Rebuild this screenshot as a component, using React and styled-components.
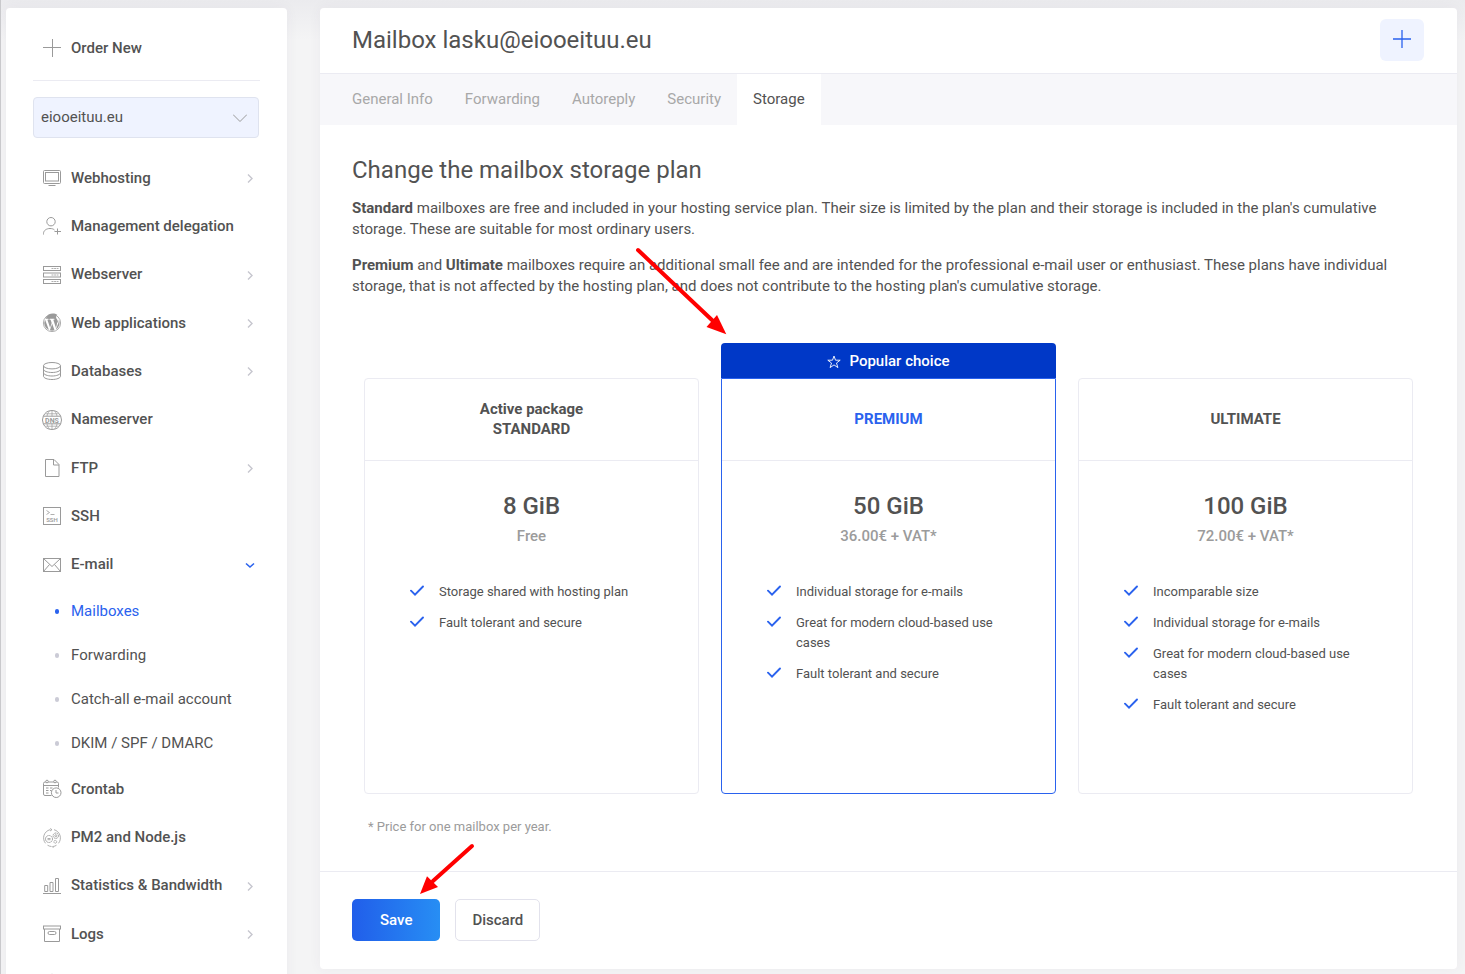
import React from 'react';
import styled, { createGlobalStyle, css } from 'styled-components';

const color = {
  text: '#525252',
  muted: '#9b9b9b',
  faint: '#a8a8a8',
  primary: '#2a62ee',
  deep: '#0038c7',
  tint: '#eff3ff',
  line: '#ebebf2',
  icon: '#9a9a9a',
  arrow: '#ff0000',
};

const GlobalStyle = createGlobalStyle`
  *, *::before, *::after { box-sizing: border-box; }
  html { background: #f4f4f5; }
  body {
    margin: 0;
    color: ${color.text};
    font-family: Roboto, "Liberation Sans", sans-serif;
    font-size: 15px;
    line-height: 21px;
  }
  a { color: inherit; text-decoration: none; }
  ul { list-style: none; margin: 0; padding: 0; }
  h1, h2, h3, p { margin: 0; }
  button, select { font: inherit; color: inherit; }
`;

const Page = styled.div`
  display: flex;
  align-items: flex-start;
  gap: 33px;
  height: 100vh;
  overflow: hidden;
  padding: 8px 8px 0 5px;
  border-left: 1px solid #c9c9cc;
  background: linear-gradient(#ebebee, #f4f4f5 40px);
`;

const panel = css`
  background: #fff;
  border-radius: 4px;
  box-shadow: 0 0 13px rgba(82, 63, 105, 0.05);
`;

const Sidebar = styled.aside`
  ${panel}
  flex: 0 0 281px;
  min-height: 100vh;
  padding: 16px 27px 0;
`;

const Divider = styled.hr`
  height: 1px;
  margin: 8px 0 16px;
  border: 0;
  background: ${color.line};
`;

const DomainPicker = styled.label`
  display: block;
  position: relative;
  margin: 0 1px 16px 0;

  svg {
    position: absolute;
    right: 12px;
    top: 14px;
    pointer-events: none;
  }
`;

const DomainSelect = styled.select`
  appearance: none;
  display: block;
  width: 100%;
  height: 41px;
  padding: 0 32px 0 7px;
  border: 1px solid #dfe3ef;
  border-radius: 4px;
  background: ${color.tint};
`;

const MenuGroup = styled.ul`
  display: grid;
  grid-auto-rows: 1fr;
  min-height: ${(p) => p.$height}px;
`;

const MenuLink = styled.a`
  display: flex;
  align-items: center;
  gap: 9px;
  height: 100%;
  min-height: 48px;
  padding: 0 5px 0 9px;
  font-weight: 500;
`;

const MenuIcon = styled.svg`
  flex: 0 0 20px;
  width: 20px;
  height: 20px;
  fill: none;
  stroke: ${color.icon};
  stroke-width: 1;
  overflow: visible;
`;

const MenuLabel = styled.span`
  flex: 1;
  white-space: nowrap;
`;

const SubLink = styled.a`
  display: flex;
  align-items: center;
  gap: 12px;
  height: 44px;
  padding-left: 22px;
  color: ${(p) => (p.$active ? color.primary : color.text)};

  &::before {
    content: '';
    width: 4px;
    height: 5px;
    border-radius: 2px;
    background: ${(p) => (p.$active ? color.primary : '#cbcbd6')};
  }
`;

const Main = styled.main`
  ${panel}
  position: relative;
  flex: 1;
  min-width: 0;
`;

const MainHeader = styled.header`
  display: flex;
  align-items: center;
  justify-content: space-between;
  height: 66px;
  padding: 0 33px 2px 32px;
  border-bottom: 1px solid ${color.line};
`;

const Title = styled.h1`
  font-size: 24px;
  line-height: 32px;
  font-weight: 400;
`;

const AddButton = styled.button`
  display: flex;
  align-items: center;
  justify-content: center;
  width: 44px;
  height: 42px;
  padding: 0 0 2px;
  border: 0;
  border-radius: 6px;
  background: ${color.tint};
`;

const Tabs = styled.nav`
  display: flex;
  padding: 0 16px;
  background: #f7f7fa;
`;

const Tab = styled.a`
  padding: 15px 16px;
  color: ${(p) => (p.$active ? color.text : color.faint)};
  background: ${(p) => (p.$active ? '#fff' : 'transparent')};
`;

const Content = styled.section`
  padding: 29px 32px 34px;
`;

const Intro = styled.p`
  margin-top: ${(p) => (p.$first ? 12 : 15)}px;

  b { font-weight: 700; }
`;

const Plans = styled.div`
  display: grid;
  grid-template-columns: repeat(3, 1fr);
  gap: 22px;
  margin-top: 46px;
  padding: 0 12px;
`;

const Plan = styled.article`
  display: flex;
  flex-direction: column;
  padding-top: ${(p) => (p.$popular ? 0 : 35)}px;
`;

const PopularBadge = styled.div`
  display: flex;
  align-items: center;
  justify-content: center;
  gap: 8px;
  height: 35px;
  padding-top: 2px;
  border-radius: 4px 4px 0 0;
  background: ${color.deep};
  color: #fff;
  font-weight: 500;
`;

const PlanBox = styled.div`
  flex: 1;
  min-height: 416px;
  border: 1px solid ${(p) => (p.$popular ? color.primary : color.line)};
  border-radius: ${(p) => (p.$popular ? '0 0 4px 4px' : '4px')};
`;

const PlanHead = styled.h3`
  display: flex;
  flex-direction: column;
  align-items: center;
  justify-content: center;
  height: 82px;
  padding-bottom: 2px;
  border-bottom: 1px solid ${color.line};
  color: ${(p) => (p.$popular ? color.primary : color.text)};
  font-size: 15px;
  line-height: 20px;
  font-weight: 700;
`;

const PlanSize = styled.p`
  margin-top: 29px;
  font-size: 24px;
  line-height: 32px;
  font-weight: 500;
  text-align: center;
`;

const PlanPrice = styled.p`
  margin-top: 4px;
  color: ${color.muted};
  font-weight: 500;
  text-align: center;
`;

const Features = styled.ul`
  display: grid;
  gap: 11px;
  padding: 35px 45px;
  font-size: 13px;
  line-height: 20px;
`;

const Feature = styled.li`
  display: flex;
  gap: 15px;

  svg { flex: none; margin-top: 3px; }
`;

const Footnote = styled.p`
  margin: 22px 16px 0;
  color: ${color.muted};
  font-size: 13px;
`;

const Actions = styled.footer`
  display: flex;
  gap: 15px;
  padding: 27px 32px 28px;
  border-top: 1px solid ${color.line};
`;

const Button = styled.button`
  height: 42px;
  padding: 0 ${(p) => (p.$primary ? 28 : 16)}px;
  border-radius: 5px;
  font-weight: 500;
  ${(p) =>
    p.$primary
      ? css`
          border: 0;
          color: #fff;
          background: linear-gradient(90deg, #215eea, #278ef4);
        `
      : css`
          border: 1px solid #e2e2ec;
          background: #fff;
        `}
`;

const Callout = styled.svg`
  position: absolute;
  left: ${(p) => p.$x}px;
  top: ${(p) => p.$y}px;
  pointer-events: none;
`;

const icons = {
  plus: <path d="M10.500 1v18M1 9.500h18" />,
  monitor: (
    <>
      <rect x="1.500" y="2.500" width="17" height="13" rx="1" />
      <rect x="3.500" y="4.500" width="13" height="8.500" />
      <path d="M6.500 17.500h7" />
    </>
  ),
  userPlus: (
    <>
      <circle cx="9" cy="5.700" r="4.200" />
      <path d="M1.500 18.500v-1c0-3 3-5 6.500-5 2 0 3.500.5 4.500 1.500M15.500 12.500v6M12.500 15.500h6.500" />
    </>
  ),
  server: (
    <>
      <rect x="1.500" y="1.500" width="17" height="4" />
      <rect x="1.500" y="8" width="17" height="4" />
      <rect x="1.500" y="14.500" width="17" height="4" />
      <path d="M9.500 3.500h7M9.500 10h7M9.500 16.500h7" strokeDasharray="2 .6" strokeWidth=".8" />
    </>
  ),
  wordpress: (
    <>
      <circle cx="10" cy="10" r="8.600" strokeWidth=".8" />
      <path
        d="M3.100 6.700 6.900 17.100A7.600 7.600 0 0 1 3.100 6.700ZM16 9.600c0-1.400-.5-2.300-.9-3-.6-.9-1.100-1.700-1.100-2.600 0-1 .7-1.800 1.500-2A7.700 7.700 0 0 0 3.600 5.800h2.600c.6 0 .6.8 0 .9l-.8.1 2.700 8 1.600-4.800-1.100-3.200-.8-.1c-.6 0-.5-.9.1-.9h4.200c.6 0 .6.8 0 .9l-.8.1 2.600 7.900.8-2.400c.4-1 .3-1.900.3-2.700ZM10.200 10.700 7.900 17.300c1.600.5 3.200.4 4.600-.1ZM16.800 6.400c.2 2-.3 3.400-.9 4.900l-2.100 5.200a7.600 7.600 0 0 0 3-10.100Z"
        fill={color.icon}
        stroke="none"
      />
    </>
  ),
  database: (
    <>
      <ellipse cx="10" cy="4.700" rx="8.500" ry="3.200" />
      <path d="M1.500 4.700v10.500c0 1.800 3.800 3.300 8.500 3.300s8.500-1.500 8.500-3.300V4.700M1.500 8.200c0 1.800 3.800 3.300 8.500 3.300s8.500-1.500 8.500-3.300M1.500 11.700c0 1.800 3.800 3.300 8.500 3.300s8.500-1.500 8.500-3.300" />
    </>
  ),
  dns: (
    <>
      <path
        d="M1.300 6.200a9.500 9.500 0 0 1 17.400 0ZM1.300 13.800a9.500 9.500 0 0 0 17.400 0ZM1.300 6.200a9.500 9.500 0 0 0 0 7.600M18.700 6.200a9.500 9.500 0 0 1 0 7.600"
      />
      <path
        d="M3.500 3.800h13M3.500 16.200h13M10 .5v5.700M10 13.800v5.700M7.500 1C6 2.500 5.300 4.500 5 6.200M12.500 1C14 2.500 14.700 4.500 15 6.200M5 13.800c.3 1.700 1 3.700 2.500 5.200M15 13.800c-.3 1.700-1 3.700-2.500 5.200"
        strokeWidth=".7"
      />
      <text x="10" y="12.500" textAnchor="middle" fontSize="7" fontWeight="700" fill={color.icon} stroke="none">
        DNS
      </text>
    </>
  ),
  file: <path d="M3.500 1.500h8.500l5 5v12H3.500ZM11.500 1.500V7H17" />,
  ssh: (
    <>
      <rect x="1.500" y="1.500" width="17" height="17" />
      <path d="m4.500 4.500 3 2-3 2M8.500 8.500h4" strokeWidth=".8" />
      <text x="10" y="16.300" textAnchor="middle" fontSize="6" fill={color.icon} stroke="none">
        SSH
      </text>
    </>
  ),
  mail: (
    <>
      <rect x="1.500" y="3.500" width="17" height="13" />
      <path d="m1.500 3.500 8.500 8 8.500-8M1.500 16.500l6-7M18.500 16.500l-6-7" />
    </>
  ),
  calendar: (
    <>
      <path d="M9.500 16.500H3a1.500 1.500 0 0 1-1.500-1.500V4.500A1.500 1.500 0 0 1 3 3h12a1.500 1.500 0 0 1 1.500 1.500v4M1.500 6.500h15" />
      <circle cx="5" cy="2.500" r="1.300" fill="#fff" />
      <circle cx="13" cy="2.500" r="1.300" fill="#fff" />
      <path d="M4 9h2.500M8 9h2.500M4 11.500h2.500M8 11.500h1.500M4 14h2.500" />
      <circle cx="14.200" cy="13.700" r="4.800" />
      <path d="M14 11v3h2.500" />
    </>
  ),
  gears: (
    <>
      <path
        d="M8 1.700a8.500 8.500 0 0 0-4.500 13.600M12 1.700a8.500 8.500 0 0 1 4.500 13.600M5.500 17.200q2 1.200 4 1.300M11 18.500q2-.2 3.500-1.300M8 .5l2 1.200L8 3M11.500 19.500l-1.500-1"
        strokeWidth=".8"
      />
      <circle cx="7" cy="11" r="3.500" strokeDasharray="1.600 .6" />
      <path d="M5.500 10.500h3M5.500 11.700h3" strokeWidth=".8" />
      <circle cx="13.800" cy="7.700" r="2.700" strokeDasharray="1.600 .6" />
      <circle cx="13.800" cy="7.700" r="1" strokeWidth=".8" />
      <circle cx="13.300" cy="13.800" r="1.400" strokeDasharray="1 .5" />
    </>
  ),
  chart: (
    <>
      <path d="M1 17.500h18" />
      <path d="M2.700 15.500v-6h3v6ZM8 15.500v-9h3v9ZM13.500 15.500v-13h3v13Z" />
    </>
  ),
  archive: (
    <>
      <rect x="1.500" y="2" width="17" height="3" />
      <path d="M2.500 5v12.500h15V5" />
      <rect x="6" y="7.500" width="8" height="3" rx="1.500" />
    </>
  ),
  shield: <path d="M10 1c2 2 4.500 3 8 3v6c0 4-3 7-8 9-5-2-8-5-8-9V4c3.500 0 6-1 8-3Z" />,
};

function Chevron({ open }) {
  return (
    <svg
      width="10"
      height="10"
      viewBox="0 0 10 10"
      fill="none"
      strokeWidth={open ? 1.6 : 1.4}
      stroke={open ? color.primary : '#c6c6ce'}
    >
      <path d={open ? 'M1 3.500 5 7l4-3.500' : 'm3 1.500 4 4-4 4'} />
    </svg>
  );
}

function Check() {
  return (
    <svg
      width="14"
      height="12"
      viewBox="0 0 14 12"
      fill="none"
      stroke={color.primary}
      strokeWidth="1.900"
      strokeLinecap="round"
    >
      <path d="m1 5.700 4 4L13 1.500" />
    </svg>
  );
}

function MenuItem({ icon, label, arrow, open }) {
  return (
    <li>
      <MenuLink href="#">
        <MenuIcon viewBox="0 0 20 20" aria-hidden="true">{icons[icon]}</MenuIcon>
        {label && <MenuLabel>{label}</MenuLabel>}
        {arrow && <Chevron open={open} />}
      </MenuLink>
    </li>
  );
}

const upperMenu = [
  { icon: 'monitor', label: 'Webhosting', arrow: true },
  { icon: 'userPlus', label: 'Management delegation' },
  { icon: 'server', label: 'Webserver', arrow: true },
  { icon: 'wordpress', label: 'Web applications', arrow: true },
  { icon: 'database', label: 'Databases', arrow: true },
  { icon: 'dns', label: 'Nameserver' },
  { icon: 'file', label: 'FTP', arrow: true },
  { icon: 'ssh', label: 'SSH' },
  { icon: 'mail', label: 'E-mail', arrow: true, open: true },
];

const emailMenu = ['Mailboxes', 'Forwarding', 'Catch-all e-mail account', 'DKIM / SPF / DMARC'];

const lowerMenu = [
  { icon: 'calendar', label: 'Crontab' },
  { icon: 'gears', label: 'PM2 and Node.js' },
  { icon: 'chart', label: 'Statistics & Bandwidth', arrow: true },
  { icon: 'archive', label: 'Logs', arrow: true },
  { icon: 'shield' },
];

const tabs = ['General Info', 'Forwarding', 'Autoreply', 'Security', 'Storage'];

const plans = [
  {
    name: 'STANDARD',
    active: true,
    size: '8 GiB',
    price: 'Free',
    features: ['Storage shared with hosting plan', 'Fault tolerant and secure'],
  },
  {
    name: 'PREMIUM',
    popular: true,
    size: '50 GiB',
    price: '36.00€ + VAT*',
    features: ['Individual storage for e-mails', 'Great for modern cloud-based use cases', 'Fault tolerant and secure'],
  },
  {
    name: 'ULTIMATE',
    size: '100 GiB',
    price: '72.00€ + VAT*',
    features: [
      'Incomparable size',
      'Individual storage for e-mails',
      'Great for modern cloud-based use cases',
      'Fault tolerant and secure',
    ],
  },
];

function PlanCard({ plan }) {
  return (
    <Plan $popular={plan.popular}>
      {plan.popular && (
        <PopularBadge>
          <svg width="14" height="14" viewBox="0 0 14 14" fill="none" stroke="#fff" strokeWidth=".9">
            <path d="m7 1 1.500 4.200h4.700L9.500 8l1.400 4.600L7 9.900l-3.900 2.700L4.500 8 .8 5.200h4.700Z" />
          </svg>
          Popular choice
        </PopularBadge>
      )}
      <PlanBox $popular={plan.popular}>
        <PlanHead $popular={plan.popular}>
          {plan.active && <span>Active package</span>}
          <span>{plan.name}</span>
        </PlanHead>
        <PlanSize>{plan.size}</PlanSize>
        <PlanPrice>{plan.price}</PlanPrice>
        <Features>
          {plan.features.map((feature) => (
            <Feature key={feature}>
              <Check />
              <span>{feature}</span>
            </Feature>
          ))}
        </Features>
      </PlanBox>
    </Plan>
  );
}

export default function App() {
  return (
    <>
      <GlobalStyle />
      <Page>
        <Sidebar>
          <ul>
            <MenuItem icon="plus" label="Order New" />
          </ul>
          <Divider />
          <DomainPicker>
            <DomainSelect aria-label="Domain" defaultValue="eiooeituu.eu">
              <option>eiooeituu.eu</option>
            </DomainSelect>
            <svg width="14" height="14" viewBox="0 0 14 14" fill="none" stroke="#999">
              <path d="m0 3.500 7 7 7-7" />
            </svg>
          </DomainPicker>
          <nav>
            <MenuGroup $height={435}>
              {upperMenu.map((item) => (
                <MenuItem key={item.label} {...item} />
              ))}
            </MenuGroup>
            <ul>
              {emailMenu.map((label, i) => (
                <li key={label}>
                  <SubLink href="#" $active={i === 0}>{label}</SubLink>
                </li>
              ))}
            </ul>
            <MenuGroup $height={242}>
              {lowerMenu.map((item) => (
                <MenuItem key={item.icon} {...item} />
              ))}
            </MenuGroup>
          </nav>
        </Sidebar>
        <Main>
          <MainHeader>
            <Title>Mailbox lasku@eiooeituu.eu</Title>
            <AddButton aria-label="Add mailbox">
              <svg width="20" height="20" viewBox="0 0 20 20" stroke={color.primary} strokeWidth="1.300">
                <path d="M10 1v18M1 10h18" />
              </svg>
            </AddButton>
          </MainHeader>
          <Tabs>
            {tabs.map((tab) => (
              <Tab key={tab} href="#" $active={tab === 'Storage'}>{tab}</Tab>
            ))}
          </Tabs>
          <Content>
            <Title as="h2">Change the mailbox storage plan</Title>
            <Intro $first>
              <b>Standard</b> mailboxes are free and included in your hosting service plan. Their size is limited by
              the plan and their storage is included in the plan's cumulative storage. These are suitable for most
              ordinary users.
            </Intro>
            <Intro>
              <b>Premium</b> and <b>Ultimate</b> mailboxes require an additional small fee and are intended for the
              professional e-mail user or enthusiast. These plans have individual storage, that is not affected by
              the hosting plan, and does not contribute to the hosting plan's cumulative storage.
            </Intro>
            <Plans>
              {plans.map((plan) => (
                <PlanCard key={plan.name} plan={plan} />
              ))}
            </Plans>
            <Footnote>* Price for one mailbox per year.</Footnote>
          </Content>
          <Actions>
            <Button $primary>Save</Button>
            <Button>Discard</Button>
          </Actions>
          <Callout $x={310} $y={232} width="110" height="100" viewBox="0 0 110 100">
            <path d="M8 10 83 81" stroke={color.arrow} strokeWidth="4" strokeLinecap="round" />
            <path d="M96.300 94.300 76.500 87 87 75Z" fill={color.arrow} />
          </Callout>
          <Callout $x={95} $y={832} width="64" height="60" viewBox="0 0 64 60">
            <path d="M57 6 18 41" stroke={color.arrow} strokeWidth="4" strokeLinecap="round" />
            <path d="M5 54 12 36.300 23 47Z" fill={color.arrow} />
          </Callout>
        </Main>
      </Page>
    </>
  );
}
